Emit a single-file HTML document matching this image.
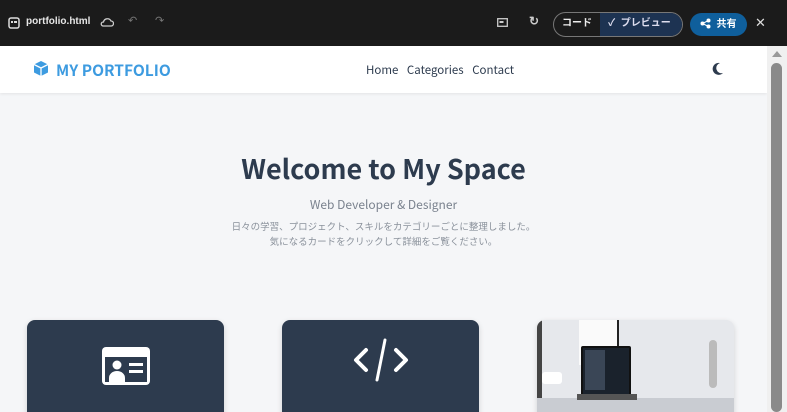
<!DOCTYPE html>
<html><head><meta charset="utf-8"><style>
*{margin:0;padding:0;box-sizing:border-box}
html,body{width:787px;height:412px;overflow:hidden}
body{background:#1c1c1c;font-family:"Liberation Sans","Noto Sans CJK JP",sans-serif;position:relative}
.top{position:absolute;left:0;top:0;width:787px;height:46px;background:#1b1b1b;color:#ddd}
.page{position:absolute;left:0;top:46px;width:767px;height:366px;background:#f5f6f8;overflow:hidden}
.nav{height:47px;background:#fff;box-shadow:0 1px 3px rgba(0,0,0,.08);position:relative}
.sb{position:absolute;left:767px;top:46px;width:20px;height:366px;background:#f0f0f0;overflow:hidden}
.card{position:absolute;top:274px;width:197px;height:100px;border-radius:8px;background:#2d3b4e;box-shadow:0 2px 6px rgba(0,0,0,.15)}
</style></head><body>
<div class="top">
 <svg style="position:absolute;left:8px;top:17px" width="12" height="12"><rect x="1" y="1" width="10" height="10" rx="2" fill="none" stroke="#ddd" stroke-width="1.5"/><rect x="3" y="4" width="2" height="2" fill="#ddd"/><rect x="6" y="4" width="3" height="2" fill="#ddd"/></svg>
 <div style="position:absolute;left:26px;top:16px;font-size:10px;font-weight:bold;color:#e6e6e6">portfolio.html</div>
 <svg style="position:absolute;left:100px;top:17px" width="14" height="11"><path d="M3 9h8a2.5 2.5 0 0 0 0-5 4 4 0 0 0-7.5 1A2 2 0 0 0 3 9z" fill="none" stroke="#ccc" stroke-width="1.3"/></svg>
 <div style="position:absolute;left:128px;top:14px;font-size:11px;color:#777">↶</div>
 <div style="position:absolute;left:155px;top:14px;font-size:11px;color:#777">↷</div>
 <svg style="position:absolute;left:497px;top:18px" width="11" height="9"><rect x=".7" y=".7" width="9.6" height="7.6" fill="none" stroke="#ccc" stroke-width="1.3"/><rect x="2.5" y="3" width="4" height="2" fill="#ccc"/></svg>
 <div style="position:absolute;left:529px;top:14px;font-size:12px;color:#ccc;font-weight:bold">↻</div>
 <div style="position:absolute;left:553px;top:12px;width:130px;height:25px;border:1.5px solid #777;border-radius:13px;overflow:hidden">
  <div style="position:absolute;left:0;top:0;width:46px;height:100%;color:#eee;font-size:10px;font-weight:bold;line-height:22px;text-align:center">コード</div>
  <div style="position:absolute;left:46px;top:0;right:0;height:100%;background:#1d3352;color:#dde;font-size:10px;font-weight:bold;line-height:22px;padding-left:8px">✓&nbsp; プレビュー</div>
 </div>
 <div style="position:absolute;left:690px;top:13px;width:57px;height:23px;border-radius:12px;background:#0f5f9c;color:#fff;font-size:10px;font-weight:bold;line-height:23px;padding-left:10px">
  <svg width="11" height="11" style="vertical-align:-2px"><circle cx="8.5" cy="2.5" r="2" fill="#fff"/><circle cx="2.5" cy="5.5" r="2" fill="#fff"/><circle cx="8.5" cy="8.5" r="2" fill="#fff"/><path d="M8.5 2.5L2.5 5.5L8.5 8.5" stroke="#fff" fill="none"/></svg>&nbsp; 共有</div>
 <div style="position:absolute;left:755px;top:15px;font-size:13px;color:#ddd">✕</div>
</div>
<div class="page">
 <div class="nav">
  <svg style="position:absolute;left:33px;top:14px" width="16" height="17" viewBox="0 0 16 17"><path d="M8 1L15 4.5V12.5L8 16L1 12.5V4.5Z" fill="#3d9be0"/><path d="M1 4.5L8 8L15 4.5M8 8V16" stroke="#fff" stroke-width="1.3" fill="none"/></svg>
  <div style="position:absolute;left:56px;top:13px;font-size:15.5px;font-weight:bold;color:#3d9be0;font-family:'Noto Sans CJK JP',sans-serif;line-height:22px">MY PORTFOLIO</div>
  <div style="position:absolute;left:366px;top:15px;font-size:11.5px;color:#2d3b4e;font-family:'Noto Sans CJK JP',sans-serif;line-height:18px;word-spacing:6px">Home Categories Contact</div>
  <svg style="position:absolute;left:712px;top:16px" width="12" height="13" viewBox="0 0 12 13"><path d="M8 1A6 6 0 1 0 11 11A5 5 0 0 1 8 1Z" fill="#2d3b4e"/></svg>
 </div>
 <div style="position:absolute;left:0;width:767px;top:101px;text-align:center;font-family:'Noto Sans CJK JP',sans-serif">
  <div style="font-size:27px;font-weight:bold;color:#2d3b4e;line-height:42px">Welcome to My Space</div>
  <div style="font-size:12px;color:#7a828e;margin-top:7px;line-height:18px">Web Developer &amp; Designer</div>
  <div style="font-size:9.5px;color:#8a919b;margin-top:5px;line-height:15px">日々の学習、プロジェクト、スキルをカテゴリーごとに整理しました。<br>気になるカードをクリックして詳細をご覧ください。</div>
 </div>
 <div class="card" style="left:27px">
  <svg style="position:absolute;left:74px;top:26px" width="50" height="40" viewBox="0 0 50 40"><rect x="1" y="1" width="48" height="38" rx="4" fill="#fff"/><rect x="4" y="11" width="42" height="25" fill="#2d3b4e"/><circle cx="16" cy="19" r="4.5" fill="#fff"/><path d="M8 36v-4a8 7 0 0 1 16 0v4z" fill="#fff"/><rect x="28" y="17" width="14" height="3" fill="#fff"/><rect x="28" y="24" width="14" height="3" fill="#fff"/></svg>
 </div>
 <div class="card" style="left:282px">
  <svg style="position:absolute;left:70px;top:16px" width="58" height="48" viewBox="0 0 58 48"><path d="M14 14L4 24L14 34M44 14L54 24L44 34" stroke="#fff" stroke-width="4" fill="none" stroke-linecap="round" stroke-linejoin="round"/><path d="M33 4L25 44" stroke="#fff" stroke-width="3" stroke-linecap="round"/></svg>
 </div>
 <div class="card" style="left:537px;background:#e6e8ec;overflow:hidden">
  <div style="position:absolute;left:42px;top:0;width:40px;height:45px;background:#fafafa;border-right:2px solid #222"></div>
  <div style="position:absolute;left:0;top:0;width:5px;height:100px;background:#444"></div>
  <div style="position:absolute;left:44px;top:26px;width:50px;height:50px;background:#1a222c;border:2px solid #111;border-radius:2px"></div>
  <div style="position:absolute;left:48px;top:30px;width:20px;height:40px;background:#3a4656"></div>
  <div style="position:absolute;left:0;top:78px;width:197px;height:30px;background:#c9ccd2"></div>
  <div style="position:absolute;left:40px;top:74px;width:60px;height:6px;background:#555"></div>
  <div style="position:absolute;left:5px;top:52px;width:20px;height:12px;background:#fff;border-radius:3px"></div>
  <div style="position:absolute;left:172px;top:20px;width:8px;height:48px;background:#bbb;border-radius:4px"></div>
 </div>
</div>
<div class="sb">
 <div style="position:absolute;left:5px;top:5px;width:0;height:0;border-left:5px solid transparent;border-right:5px solid transparent;border-bottom:6px solid #999"></div>
 <div style="position:absolute;left:4px;top:17px;width:11px;height:349px;background:#8a8a8a;border-radius:6px"></div>
</div>
</body></html>
